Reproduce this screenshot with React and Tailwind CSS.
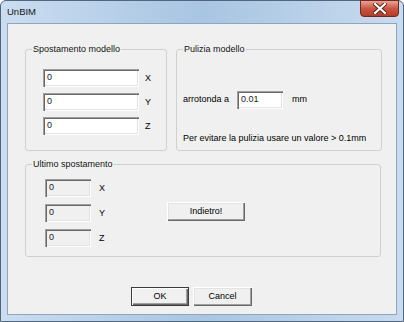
const font = { fontFamily: '"Liberation Sans", Arial, sans-serif' };

function Field({ value, w, disabled }) {
  return (
    <div
      className={`h-[18px] ${w} pl-[4px] pt-[3px] text-[9px] leading-[10px] text-[#1c1c28] shadow-[inset_1px_1px_0_#a0a0a0,inset_2px_2px_0_#696969,inset_-1px_-1px_0_#ffffff,inset_-2px_-2px_0_#e3e3e3] ${disabled ? 'bg-[#f0f0f0]' : 'bg-white'}`}
    >
      {value}
    </div>
  );
}

function Button({ label, w, def }) {
  return (
    <div
      className={`flex items-center justify-center h-[19px] ${w} bg-[#f0f0f0] text-[9px] text-black ${
        def
          ? 'shadow-[inset_0_0_0_1px_#3c3c3c,inset_2px_2px_0_#ffffff,inset_-2px_-2px_0_#696969,inset_-3px_-3px_0_#a0a0a0]'
          : 'shadow-[inset_1px_1px_0_#ffffff,inset_-1px_-1px_0_#696969,inset_-2px_-2px_0_#a0a0a0,inset_2px_2px_0_#e3e3e3]'
      }`}
    >
      {label}
    </div>
  );
}

function Group({ title, className, children }) {
  return (
    <div className={`relative border border-[#d0d0d0] rounded-[3px] ${className}`}>
      <span className="absolute -top-[6px] left-[6px] px-[1px] bg-[#f0f0f0] text-[9px] leading-[11px] text-[#141414]">{title}</span>
      {children}
    </div>
  );
}

export default function App() {
  return (
    <div className="w-[404px] h-[322px] bg-white" style={font}>
      <div className="flex flex-col w-full h-full rounded-t-[6px] border border-[#52677e] bg-gradient-to-r from-[#cbddf1] via-[#a8c5e2] to-[#c8dbef]">
        {/* title bar */}
        <div className="flex h-[22px] shrink-0">
          <span className="pl-[6px] pt-[5px] text-[9.5px] leading-[12px] text-[#161616]">UnBIM</span>
          <div className="ml-auto mr-[4px] -mt-[1px] flex items-center justify-center w-[39px] h-[17px] rounded-b-[4px] border border-[#6b2a22] bg-gradient-to-b from-[#e6a497] via-[#cc5442] to-[#b83a26]">
            <svg width="14" height="11" viewBox="0 0 14 11">
              <path d="M2 1 L12 10 M12 1 L2 10" stroke="#5a2018" strokeWidth="4" strokeLinecap="square" />
              <path d="M2 1 L12 10 M12 1 L2 10" stroke="#ffffff" strokeWidth="2.2" strokeLinecap="square" />
            </svg>
          </div>
        </div>

        {/* client area */}
        <div className="flex-1 mx-[6px] mb-[6px] border border-[#8ea5bd] bg-[#f0f0f0] pt-[25px] pl-[17px] text-[9px] text-black">
          <div className="flex gap-[9px]">
            <Group title="Spostamento modello" className="w-[142px] h-[102px] pt-[19px] pl-[17px]">
              <div className="flex flex-col gap-[6px]">
                {['X', 'Y', 'Z'].map(a => (
                  <div key={a} className="flex items-center">
                    <Field value="0" w="w-[96px]" />
                    <span className="ml-[6px] pt-[2px]">{a}</span>
                  </div>
                ))}
              </div>
            </Group>

            <Group title="Pulizia modello" className="w-[206px] h-[102px] pl-[6px]">
              <div className="flex items-center mt-[41px]">
                <span className="w-[54px]">arrotonda a</span>
                <Field value="0.01" w="w-[46px]" />
                <span className="ml-[9px]">mm</span>
              </div>
              <p className="mt-[23px]">Per evitare la pulizia usare un valore &gt; 0.1mm</p>
            </Group>
          </div>

          <Group title="Ultimo spostamento" className="mt-[13px] w-[356px] h-[93px] pt-[14px] pl-[19px] flex items-start">
            <div className="flex flex-col gap-[7px]">
              {['X', 'Y', 'Z'].map(a => (
                <div key={a} className="flex items-center">
                  <Field value="0" w="w-[46px]" disabled />
                  <span className="ml-[8px] pt-[2px]">{a}</span>
                </div>
              ))}
            </div>
            <div className="ml-[62px] mt-[23px]">
              <Button label="Indietro!" w="w-[78px]" />
            </div>
          </Group>

          <div className="flex gap-[4px] mt-[30px] ml-[106px]">
            <Button label="OK" w="w-[58px]" def />
            <Button label="Cancel" w="w-[59px]" />
          </div>
        </div>
      </div>
    </div>
  );
}
